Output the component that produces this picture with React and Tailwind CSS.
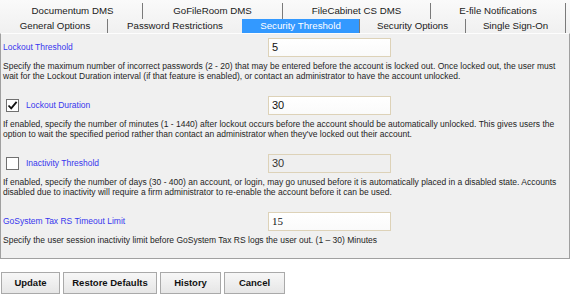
import React from "react";

const tabRow1 = [
  { label: "Documentum DMS", w: "w-[140px]" },
  { label: "GoFileRoom DMS", w: "w-[140px]" },
  { label: "FileCabinet CS DMS", w: "w-[148px]" },
  { label: "E-file Notifications", w: "w-[135px]" },
];

const tabRow2 = [
  { label: "General Options", w: "w-[105px]" },
  { label: "Password Restrictions", w: "w-[134px]", noDivider: true },
  { label: "Security Threshold", w: "w-[118px]", active: true },
  { label: "Security Options", w: "w-[106px]" },
  { label: "Single Sign-On", w: "w-[100px]" },
];

function Tab({ tab }) {
  if (tab.active) {
    return (
      <div
        className={`${tab.w} h-full flex items-center justify-center bg-[#3399ff] text-white border-r border-[#7a7a7a]`}
      >
        {tab.label}
      </div>
    );
  }
  return (
    <div
      className={`${tab.w} h-full flex items-center justify-center text-[#1a1a1a] ${
        tab.noDivider ? "" : "border-r border-[#7a7a7a]"
      }`}
    >
      {tab.label}
    </div>
  );
}

function Checkbox({ checked }) {
  return (
    <span className="w-[13px] h-[13px] ml-[3px] mr-[7px] border border-[#707070] bg-white flex items-center justify-center shrink-0">
      {checked && (
        <svg width="11" height="11" viewBox="0 0 11 11">
          <path
            d="M1.5 5.5 L4.2 8.3 L9.6 1.8"
            fill="none"
            stroke="#111"
            strokeWidth="1.8"
          />
        </svg>
      )}
    </span>
  );
}

function Setting({ label, checkbox, value, disabled, serif, lines, first }) {
  return (
    <div className={first ? "mt-[4px]" : "mt-[15px]"}>
      <div className="flex items-center h-[19px]">
        <div className="w-[265px] flex items-center">
          {checkbox !== undefined && <Checkbox checked={checkbox} />}
          <span className="text-[#3737ee]">{label}</span>
        </div>
        <div
          className={`w-[123px] h-[19px] border border-[#ddd2b8] flex items-center pl-[3px] text-[11px] ${
            disabled
              ? "bg-[#efefef] text-[#333]"
              : "bg-gradient-to-b from-white to-[#fafafa] text-[#111]"
          } ${serif ? "font-['Liberation_Serif',serif]" : ""}`}
        >
          {value}
        </div>
      </div>
      <div className="mt-[4px] leading-[10px] text-[#1e1e1e]">
        {lines.map((l, i) => (
          <div key={i} className="whitespace-nowrap">
            {l}
          </div>
        ))}
      </div>
    </div>
  );
}

function Btn({ children, w }) {
  return (
    <button
      className={`${w} h-[22px] border border-[#a9a9a9] bg-gradient-to-b from-[#f7f7f7] to-[#e6e6e6] font-bold text-[9.5px] text-[#111]`}
    >
      {children}
    </button>
  );
}

export default function App() {
  return (
    <div className="w-[574px] h-[296px] bg-white font-['Liberation_Sans',Arial,sans-serif] text-[8.5px] overflow-hidden">
      <div className="w-[570px] pt-[3px] bg-gradient-to-b from-[#fafafa] to-[#f0f0f0] text-[9.7px]">
        <div className="flex h-[16px] pl-[3px]">
          {tabRow1.map((t) => (
            <Tab key={t.label} tab={t} />
          ))}
        </div>
        <div className="flex h-[14px] pl-[3px]">
          {tabRow2.map((t) => (
            <Tab key={t.label} tab={t} />
          ))}
        </div>
      </div>
      <div className="w-[570px] h-[226px] bg-[#f0f0f0] border border-[#a0a0a0] border-t-[#fdfdfd] pl-[2px]">
        <Setting
          first
          label="Lockout Threshold"
          value="5"
          lines={[
            "Specify the maximum number of incorrect passwords (2 - 20) that may be entered before the account is locked out. Once locked out, the user must",
            "wait for the Lockout Duration interval (if that feature is enabled), or contact an administrator to have the account unlocked.",
          ]}
        />
        <Setting
          label="Lockout Duration"
          checkbox={true}
          value="30"
          lines={[
            "If enabled, specify the number of minutes (1 - 1440) after lockout occurs before the account should be automatically unlocked. This gives users the",
            "option to wait the specified period rather than contact an administrator when they've locked out their account.",
          ]}
        />
        <Setting
          label="Inactivity Threshold"
          checkbox={false}
          value="30"
          disabled
          lines={[
            "If enabled, specify the number of days (30 - 400) an account, or login, may go unused before it is automatically placed in a disabled state. Accounts",
            "disabled due to inactivity will require a firm administrator to re-enable the account before it can be used.",
          ]}
        />
        <Setting
          label="GoSystem Tax RS Timeout Limit"
          value="15"
          serif
          lines={[
            "Specify the user session inactivity limit before GoSystem Tax RS logs the user out. (1 \u2013 30) Minutes",
          ]}
        />
      </div>
      <div className="flex gap-[3px] mt-[13px] pl-[1px]">
        <Btn w="w-[59px]">Update</Btn>
        <Btn w="w-[94px]">Restore Defaults</Btn>
        <Btn w="w-[61px]">History</Btn>
        <Btn w="w-[61px]">Cancel</Btn>
      </div>
    </div>
  );
}
